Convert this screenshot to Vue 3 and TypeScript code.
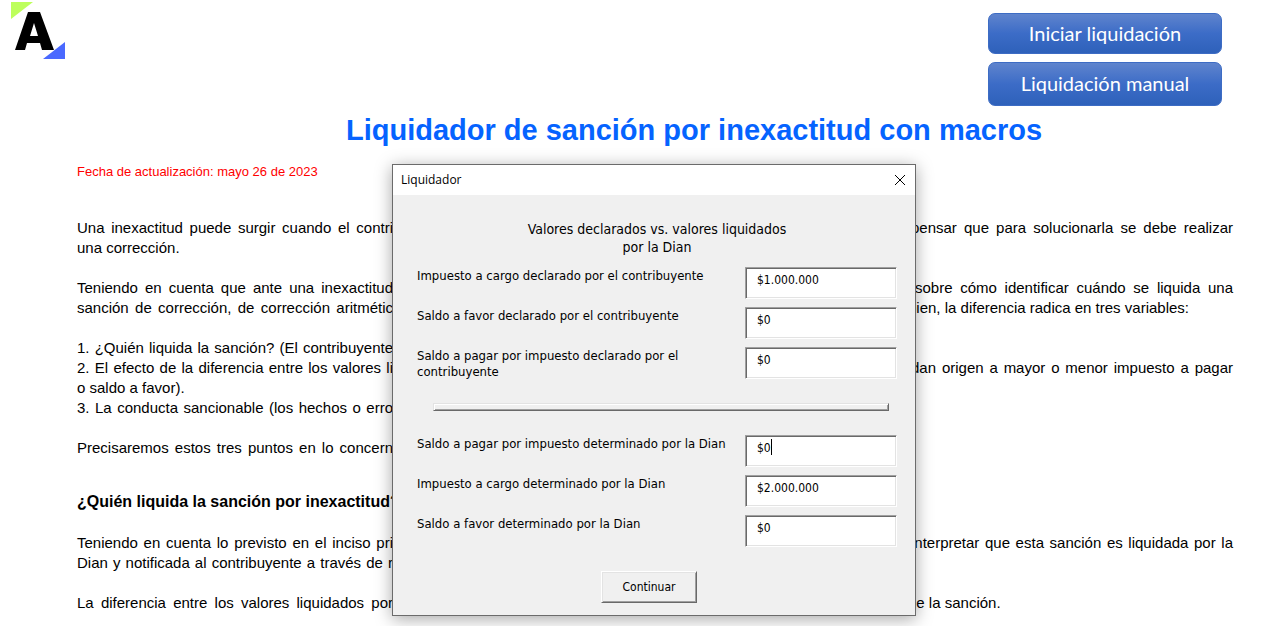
<script setup lang="ts">
import { ref } from 'vue'

interface Line {
  start: string
  end?: string
  short?: boolean
  fit?: 'wide' | 'narrow'
}

interface Field {
  id: string
  label: string
  value: string
  active?: boolean
}

const paragraphs: Line[][] = [
  [
    { start: 'Una inexactitud puede surgir cuando el contri', end: 'pensar que para solucionarla se debe realizar', fit: 'wide' },
    { start: 'una corrección.', short: true },
  ],
  [
    { start: 'Teniendo en cuenta que ante una inexactitud', end: 'sobre cómo identificar cuándo se liquida una', fit: 'narrow' },
    { start: 'sanción de corrección, de corrección aritmétic', end: 'bien, la diferencia radica en tres variables:' },
  ],
  [
    { start: '1. ¿Quién liquida la sanción? (El contribuyente' },
    { start: '2. El efecto de la diferencia entre los valores li', end: 'dan origen a mayor o menor impuesto a pagar', fit: 'wide' },
    { start: 'o saldo a favor).', short: true },
    { start: '3. La conducta sancionable (los hechos o erro' },
  ],
  [{ start: 'Precisaremos estos tres puntos en lo concern' }],
]

const answer: Line[][] = [
  [
    { start: 'Teniendo en cuenta lo previsto en el inciso pri', end: 'interpretar que esta sanción es liquidada por la', fit: 'wide' },
    { start: 'Dian y notificada al contribuyente a través de r' },
  ],
  [{ start: 'La diferencia entre los valores liquidados por', end: 'de la sanción.' }],
]

const declared = ref<Field[]>([
  { id: 'cargo-declarado', label: 'Impuesto a cargo declarado por el contribuyente', value: '$1.000.000' },
  { id: 'favor-declarado', label: 'Saldo a favor declarado por el contribuyente', value: '$0' },
  { id: 'pagar-declarado', label: 'Saldo a pagar por impuesto declarado por el contribuyente', value: '$0' },
])

const determined = ref<Field[]>([
  { id: 'pagar-dian', label: 'Saldo a pagar por impuesto determinado por la Dian', value: '$0', active: true },
  { id: 'cargo-dian', label: 'Impuesto a cargo determinado por la Dian', value: '$2.000.000' },
  { id: 'favor-dian', label: 'Saldo a favor determinado por la Dian', value: '$0' },
])
</script>

<template>
  <div class="page">
    <header class="top">
      <svg class="logo" viewBox="0 0 56 58" role="img" aria-label="A">
        <path d="M1 0H23L1 17Z" fill="#bdff5c" />
        <path d="M55 40V57H33Z" fill="#4a69ff" />
        <path fill-rule="evenodd" d="M18 10H30L44 48H32L30 41H17L15 48H5ZM24 21L20 34H28Z" fill="#000" />
      </svg>
      <nav class="actions">
        <button type="button" class="action">Iniciar liquidación</button>
        <button type="button" class="action tall">Liquidación manual</button>
      </nav>
    </header>

    <main class="article">
      <h1>Liquidador de sanción por inexactitud con macros</h1>
      <p class="date">Fecha de actualización: mayo 26 de 2023</p>
      <section class="text">
        <p v-for="(lines, i) in paragraphs" :key="i">
          <span v-for="line in lines" :key="line.start" class="line">
            <span class="start" :class="{ short: line.short }">{{ line.start }}</span>
            <span v-if="line.end" class="end" :class="line.fit">{{ line.end }}</span>
          </span>
        </p>
      </section>
      <h2>¿Quién liquida la sanción por inexactitud?</h2>
      <section class="text">
        <p v-for="(lines, i) in answer" :key="i">
          <span v-for="line in lines" :key="line.start" class="line">
            <span class="start" :class="{ short: line.short }">{{ line.start }}</span>
            <span v-if="line.end" class="end" :class="line.fit">{{ line.end }}</span>
          </span>
        </p>
      </section>
    </main>

    <div class="dialog" role="dialog" aria-labelledby="dialog-title">
      <div class="titlebar">
        <span id="dialog-title">Liquidador</span>
        <button type="button" class="close" aria-label="Cerrar">
          <svg viewBox="0 0 12 12"><path d="M1 1L11 11M11 1L1 11" stroke="#000" fill="none" /></svg>
        </button>
      </div>
      <form class="form" @submit.prevent>
        <h3>Valores declarados vs. valores liquidados por la Dian</h3>
        <div v-for="field in declared" :key="field.id" class="row">
          <label :for="field.id">{{ field.label }}</label>
          <div class="box"><input :id="field.id" v-model="field.value" type="text" /></div>
        </div>
        <div class="divider"></div>
        <div v-for="field in determined" :key="field.id" class="row">
          <label :for="field.id">{{ field.label }}</label>
          <div class="box">
            <input :id="field.id" v-model="field.value" type="text" />
            <span v-if="field.active" class="caret"></span>
          </div>
        </div>
        <button type="submit" class="submit">Continuar</button>
      </form>
    </div>
  </div>
</template>

<style>
body {
  background: #fff;
}
</style>

<style scoped>
.page {
  position: relative;
  overflow: hidden;
  min-height: 100vh;
  box-sizing: border-box;
  font-family: "Liberation Sans", Arial, sans-serif;
  font-size: 15px;
  line-height: 20px;
  color: #000;
}
.top {
  display: flex;
  justify-content: space-between;
  align-items: flex-start;
  padding: 0 42px 0 10px;
}
.logo {
  width: 56px;
  height: 58px;
  margin-top: 2px;
}
.actions {
  display: flex;
  flex-direction: column;
  gap: 8px;
  width: 234px;
  padding-top: 13px;
}
.action {
  height: 41px;
  padding: 0 0 2px;
  border: 1px solid #3d6cc4;
  border-radius: 7px;
  background: linear-gradient(#5f84cd, #3c6cc7 50%, #2e61ba);
  color: #fff;
  font-family: Lato, "Open Sans", sans-serif;
  font-size: 20px;
}
.action.tall {
  height: 44px;
}
.article {
  padding: 6px 31px 0 77px;
}
h1 {
  margin: 0;
  padding-left: 78px;
  text-align: center;
  font-size: 29px;
  line-height: 36px;
  color: #0563ff;
}
.date {
  margin: 14px 0 36px;
  font-size: 13px;
  color: #f00;
}
.text {
  display: flex;
  flex-direction: column;
  gap: 20px;
}
.text p {
  margin: 0;
}
.line {
  display: flex;
  justify-content: space-between;
  white-space: nowrap;
}
.start {
  width: 316px;
  text-align-last: justify;
}
.start.short {
  text-align-last: left;
}
.end {
  width: 325px;
}
.end.wide,
.end.narrow {
  text-align-last: justify;
}
.end.wide {
  width: 322px;
}
.end.narrow {
  width: 318px;
}
h2 {
  margin: 34px 0 21px;
  font-size: 16px;
  line-height: 20px;
}
.dialog {
  position: absolute;
  top: 164px;
  left: 392px;
  width: 524px;
  box-sizing: border-box;
  border: 1px solid #6b6b6b;
  background: #f0f0f0;
  box-shadow: 0 3px 16px rgba(0, 0, 0, 0.35);
  font-family: "DejaVu Sans Condensed", "Noto Sans", sans-serif;
  font-size: 13px;
  line-height: 16px;
}
.titlebar {
  display: flex;
  justify-content: space-between;
  align-items: center;
  height: 30px;
  padding: 0 9px 0 8px;
  background: #fff;
  font-family: "Open Sans", sans-serif;
  font-size: 12px;
}
.close {
  display: flex;
  padding: 0;
  border: 0;
  background: none;
}
.close svg {
  width: 12px;
  height: 12px;
}
.form {
  display: flex;
  flex-direction: column;
  padding: 25px 18px 12px 24px;
}
h3 {
  align-self: center;
  width: 280px;
  margin: 0 0 11px;
  text-align: center;
  font-size: 14px;
  font-weight: 400;
  line-height: 18px;
}
.row {
  display: flex;
  justify-content: space-between;
  align-items: flex-start;
  height: 40px;
}
label {
  max-width: 316px;
  padding-top: 1px;
}
.box {
  position: relative;
  width: 152px;
}
input {
  display: block;
  width: 100%;
  height: 32px;
  box-sizing: border-box;
  padding: 0 11px 6px;
  border: 1px solid;
  border-color: #a0a0a0 #fff #fff #a0a0a0;
  border-radius: 0;
  box-shadow: inset 1px 1px #696969, inset -1px -1px #e3e3e3;
  background: #fff;
  color: #000;
  font: inherit;
  font-size: 12px;
  outline: 0;
}
.caret {
  position: absolute;
  top: 4px;
  left: 26px;
  width: 1px;
  height: 16px;
  background: #000;
}
.divider {
  height: 8px;
  margin: 16px 8px 24px 16px;
  box-sizing: border-box;
  border: 1px solid;
  border-color: #e3e3e3 #696969 #696969 #e3e3e3;
  box-shadow: inset 1px 1px #fff, inset -1px -1px #a0a0a0;
}
.submit {
  align-self: center;
  width: 96px;
  height: 32px;
  margin: 16px 16px 0 0;
  padding: 0;
  border: 1px solid;
  border-color: #fff #696969 #696969 #fff;
  border-radius: 0;
  box-shadow: inset 1px 1px #e3e3e3, inset -1px -1px #a0a0a0;
  background: #f0f0f0;
  color: #000;
  font: inherit;
  font-size: 12px;
}
</style>
